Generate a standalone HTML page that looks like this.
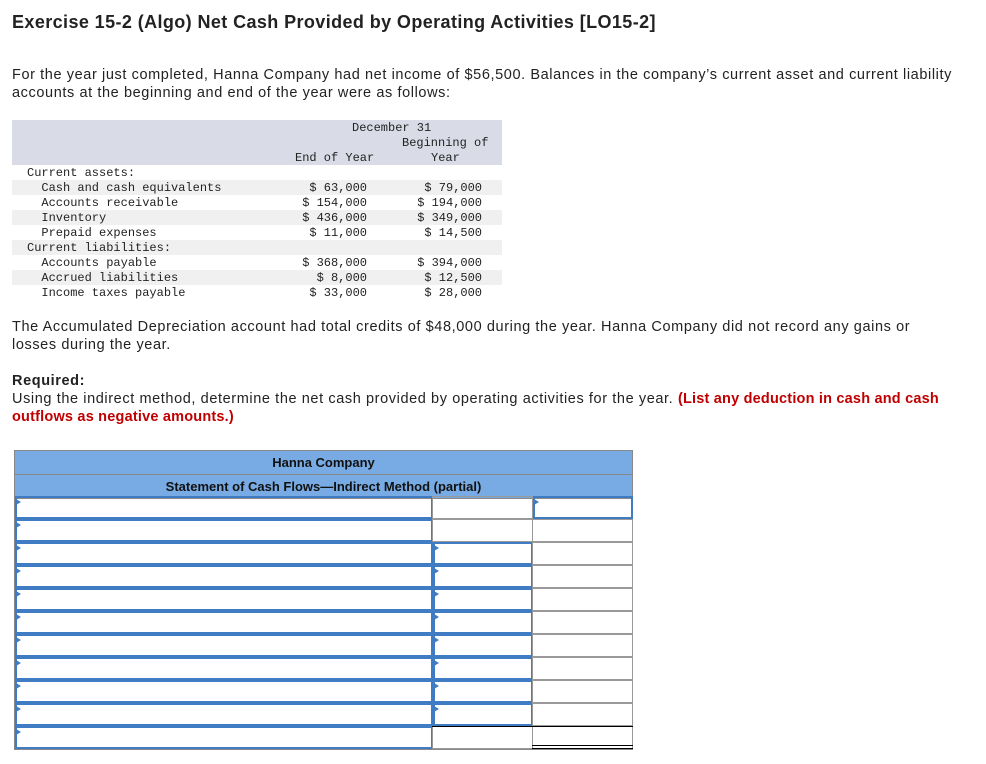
<!DOCTYPE html>
<html><head><meta charset="utf-8"><style>
body{margin:0;width:986px;height:764px;background:#fff;font-family:"Liberation Sans",Arial,sans-serif;color:#222;position:relative;overflow:hidden}
.a{position:absolute;white-space:nowrap}
h1{position:absolute;left:12px;top:12px;margin:0;font-size:18px;letter-spacing:0.4px;font-weight:bold;color:#222}
p{margin:0}
.t{font-size:14.5px;line-height:18px;letter-spacing:0.6px}
.m{font-family:"Liberation Mono",monospace;font-size:12px;color:#222}
.band{position:absolute;left:12px;width:490px;height:15px}
.tb{position:absolute;left:14px;top:450px;width:619px;border:1px solid #888;box-sizing:border-box}
.hd{background:#78abe3;border-bottom:1px solid #888;height:23px;line-height:23px;text-align:center;font-size:13px;font-weight:bold;color:#111}
.cell{position:absolute;box-sizing:border-box}
.in{border:2px solid #3f7cc4}
.arr{position:absolute;width:0;height:0;border-top:3px solid transparent;border-bottom:3px solid transparent;border-left:5px solid #3f7cc4}
</style></head><body>
<h1>Exercise 15-2 (Algo) Net Cash Provided by Operating Activities [LO15-2]</h1>
<p class="a t" style="left:12px;top:66px">For the year just completed, Hanna Company had net income of $56,500. Balances in the company’s current asset and current liability<br>accounts at the beginning and end of the year were as follows:</p>

<div class="band" style="top:120px;height:45px;background:#d9dce6"></div>
<div class="band" style="top:180px;background:#f0f0f0"></div>
<div class="band" style="top:210px;background:#f0f0f0"></div>
<div class="band" style="top:240px;background:#f0f0f0"></div>
<div class="band" style="top:270px;background:#f0f0f0"></div>
<div class="a m" style="left:352px;top:121px">December 31</div>
<div class="a m" style="left:402px;top:136px">Beginning of</div>
<div class="a m" style="left:295px;top:151px">End of Year</div>
<div class="a m" style="left:431px;top:151px">Year</div>
<div class="a m" style="left:27px;top:166px;line-height:15px">Current assets:<br>&nbsp;&nbsp;Cash and cash equivalents<br>&nbsp;&nbsp;Accounts receivable<br>&nbsp;&nbsp;Inventory<br>&nbsp;&nbsp;Prepaid expenses<br>Current liabilities:<br>&nbsp;&nbsp;Accounts payable<br>&nbsp;&nbsp;Accrued liabilities<br>&nbsp;&nbsp;Income taxes payable</div>
<div class="a m" style="left:280px;width:87px;text-align:right;top:181px;line-height:15px">$ 63,000<br>$ 154,000<br>$ 436,000<br>$ 11,000<br>&nbsp;<br>$ 368,000<br>$ 8,000<br>$ 33,000</div>
<div class="a m" style="left:395px;width:87px;text-align:right;top:181px;line-height:15px">$ 79,000<br>$ 194,000<br>$ 349,000<br>$ 14,500<br>&nbsp;<br>$ 394,000<br>$ 12,500<br>$ 28,000</div>

<p class="a t" style="left:12px;top:318px">The Accumulated Depreciation account had total credits of $48,000 during the year. Hanna Company did not record any gains or<br>losses during the year.</p>
<p class="a t" style="left:12px;top:372px"><b>Required:</b><br>Using the indirect method, determine the net cash provided by operating activities for the year. <b style="color:#c00000;letter-spacing:0.2px">(List any deduction in cash and cash<br>outflows as negative amounts.)</b></p>

<div class="tb" style="height:300px">
<div class="hd">Hanna Company</div>
<div class="hd">Statement of Cash Flows—Indirect Method (partial)</div>
</div>
<div id="rows"></div>
<script>
var h='';
for(var i=0;i<11;i++){
 var y=496+i*23;
 h+='<div class="cell in" style="left:15px;top:'+y+'px;width:418px;height:23px"></div><div class="arr" style="left:16px;top:'+(y+3)+'px"></div>';
 if(i>=2&&i<=9){h+='<div class="cell in" style="left:433px;top:'+y+'px;width:100px;height:23px"></div><div class="arr" style="left:434px;top:'+(y+3)+'px"></div>';}
 else{h+='<div class="cell" style="left:432px;top:'+y+'px;width:101px;height:23px;border:1px solid #999"></div>';}
 if(i==0){h+='<div class="cell in" style="left:533px;top:'+y+'px;width:100px;height:23px"></div><div class="arr" style="left:534px;top:'+(y+3)+'px"></div>';}
 else{h+='<div class="cell" style="left:532px;top:'+y+'px;width:101px;height:23px;border:1px solid #999"></div>';}
}
h+='<div class="cell" style="left:432px;top:726px;width:201px;height:1px;background:#000"></div>';
h+='<div class="cell" style="left:532px;top:745px;width:101px;height:4px;border-top:1px solid #000;border-bottom:1px solid #000"></div>';
document.getElementById('rows').innerHTML=h;
</script>
</body></html>
